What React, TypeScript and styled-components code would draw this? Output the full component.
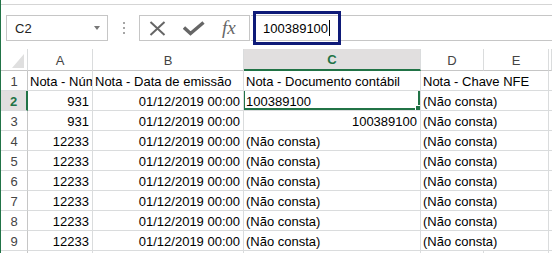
import styled, { createGlobalStyle } from "styled-components";

const GlobalStyle = createGlobalStyle`
  html, body {
    margin: 0;
    padding: 0;
    background: #ffffff;
  }
  body {
    font-family: "Liberation Sans", Arial, sans-serif;
  }
`;

const GREEN = "#217346";
const GRID = "#dadcdd";
const COLS = "27px 65px 151px 177px 63px 65px 1fr";

type Align = "left" | "right";

interface LinhaDados {
  n: number;
  a: string;
  b: string;
  c: string;
  cAlign: Align;
  d: string;
}

const linhas: LinhaDados[] = [
  { n: 1, a: "Nota - Número", b: "Nota - Data de emissão", c: "Nota - Documento contábil", cAlign: "left", d: "Nota - Chave NFE" },
  { n: 2, a: "931", b: "01/12/2019 00:00", c: "100389100", cAlign: "left", d: "(Não consta)" },
  { n: 3, a: "931", b: "01/12/2019 00:00", c: "100389100", cAlign: "right", d: "(Não consta)" },
  { n: 4, a: "12233", b: "01/12/2019 00:00", c: "(Não consta)", cAlign: "left", d: "(Não consta)" },
  { n: 5, a: "12233", b: "01/12/2019 00:00", c: "(Não consta)", cAlign: "left", d: "(Não consta)" },
  { n: 6, a: "12233", b: "01/12/2019 00:00", c: "(Não consta)", cAlign: "left", d: "(Não consta)" },
  { n: 7, a: "12233", b: "01/12/2019 00:00", c: "(Não consta)", cAlign: "left", d: "(Não consta)" },
  { n: 8, a: "12233", b: "01/12/2019 00:00", c: "(Não consta)", cAlign: "left", d: "(Não consta)" },
  { n: 9, a: "12233", b: "01/12/2019 00:00", c: "(Não consta)", cAlign: "left", d: "(Não consta)" },
];

const colunas = ["A", "B", "C", "D", "E", ""];

export default function App() {
  return (
    <>
      <GlobalStyle />
      <Janela>
        <TopLine />
        <BarraFormula>
          <CaixaNome>
            C2
            <Seta />
          </CaixaNome>
          <Alca>
            <Ponto />
            <Ponto />
            <Ponto />
          </Alca>
          <CaixaBotoes>
            <svg width="17" height="15" viewBox="0 0 17 15">
              <path d="M1.5 1 L15.5 14 M15.5 1 L1.5 14" stroke="#666666" strokeWidth="2" fill="none" />
            </svg>
            <svg width="22" height="15" viewBox="0 0 22 15">
              <path d="M1 6.5 L7.5 12.5 L20.5 1.5" stroke="#666666" strokeWidth="3.4" fill="none" />
            </svg>
            <Fx>fx</Fx>
          </CaixaBotoes>
          <EntradaFormula>
            100389100
            <Cursor />
            <Destaque />
          </EntradaFormula>
        </BarraFormula>

        <Linha $altura={22}>
          <Canto>
            <svg width="12" height="14" viewBox="0 0 12 14">
              <polygon points="12,0 12,14 0,14" fill="#dfdfdf" />
            </svg>
          </Canto>
          {colunas.map((letra, i) => (
            <CabecalhoColuna key={i} $ativo={letra === "C"}>
              {letra}
            </CabecalhoColuna>
          ))}
        </Linha>

        {linhas.map((linha) => (
          <Linha key={linha.n} $altura={20}>
            <CabecalhoLinha $ativo={linha.n === 2}>{linha.n}</CabecalhoLinha>
            <Celula $align={linha.n === 1 ? "left" : "right"}>{linha.a}</Celula>
            <Celula $align={linha.n === 1 ? "left" : "right"}>{linha.b}</Celula>
            <Celula $align={linha.cAlign}>
              {linha.c}
              {linha.n === 2 && (
                <Selecao>
                  <Alca2 />
                </Selecao>
              )}
            </Celula>
            <Celula $align="left" $transborda>
              {linha.d}
            </Celula>
            <Celula $align="left" />
            <Celula $align="left" />
          </Linha>
        ))}
        <Linha $altura={20}>
          <CabecalhoLinha $ativo={false} />
          <Celula $align="left" />
          <Celula $align="left" />
          <Celula $align="left" />
          <Celula $align="left" />
          <Celula $align="left" />
          <Celula $align="left" />
        </Linha>
      </Janela>
    </>
  );
}

const Janela = styled.div`
  width: 552px;
  height: 253px;
  overflow: hidden;
  box-sizing: border-box;
  border-left: 1px solid ${GREEN};
  background: #ffffff;
`;

const TopLine = styled.div`
  height: 5px;
  box-sizing: border-box;
  border-bottom: 1px solid #d5d5d5;
`;

const BarraFormula = styled.div`
  display: flex;
  height: 26px;
  margin: 10px 0 8px 5px;
`;

const CaixaNome = styled.div`
  width: 102px;
  box-sizing: border-box;
  border: 1px solid #c6c6c6;
  display: flex;
  align-items: center;
  padding-left: 8px;
  font-size: 13px;
  color: #222222;
`;

const Seta = styled.div`
  margin-left: auto;
  margin-right: 7px;
  width: 0;
  height: 0;
  border-top: 4px solid #777777;
  border-left: 3.5px solid transparent;
  border-right: 3.5px solid transparent;
`;

const Alca = styled.div`
  width: 31px;
  display: flex;
  flex-direction: column;
  align-items: center;
  justify-content: center;
  gap: 3px;
`;

const Ponto = styled.div`
  width: 2px;
  height: 2px;
  background: #a6a6a6;
`;

const CaixaBotoes = styled.div`
  width: 111px;
  box-sizing: border-box;
  border: 1px solid #c6c6c6;
  display: flex;
  align-items: center;
  padding-left: 9px;
  gap: 17px;
`;

const Fx = styled.span`
  font-family: "Liberation Serif", "Times New Roman", serif;
  font-style: italic;
  font-size: 19px;
  color: #666666;
  line-height: 1;
  margin-top: -2px;
`;

const EntradaFormula = styled.div`
  flex: 1;
  margin-left: 1px;
  position: relative;
  border-top: 1px solid #c6c6c6;
  border-bottom: 1px solid #c6c6c6;
  display: flex;
  align-items: center;
  padding-left: 12px;
  font-size: 13px;
  color: #000000;
`;

const Cursor = styled.span`
  display: inline-block;
  width: 1px;
  height: 16px;
  background: #000000;
  margin-left: 1px;
`;

const Destaque = styled.div`
  position: absolute;
  left: 2px;
  top: -5px;
  width: 88px;
  height: 34px;
  box-sizing: border-box;
  border: 3px solid #0e1a78;
`;

const Linha = styled.div<{ $altura: number }>`
  display: grid;
  grid-template-columns: ${COLS};
  height: ${(p) => p.$altura}px;
`;

const Canto = styled.div`
  box-sizing: border-box;
  border-right: 1px solid ${GRID};
  border-bottom: 1px solid #c6c6c6;
  display: flex;
  align-items: flex-end;
  justify-content: flex-end;
  padding: 0 3px 2px 0;
`;

const CabecalhoColuna = styled.div<{ $ativo: boolean }>`
  box-sizing: border-box;
  border-right: 1px solid ${GRID};
  border-bottom: ${(p) => (p.$ativo ? `2px solid ${GREEN}` : "1px solid #c6c6c6")};
  background: ${(p) => (p.$ativo ? "#e1dfdf" : "#ffffff")};
  color: ${(p) => (p.$ativo ? GREEN : "#444444")};
  font-weight: ${(p) => (p.$ativo ? "bold" : "normal")};
  font-size: 13px;
  display: flex;
  align-items: center;
  justify-content: center;
  padding-top: 1px;
`;

const CabecalhoLinha = styled.div<{ $ativo: boolean }>`
  box-sizing: border-box;
  border-right: ${(p) => (p.$ativo ? `2px solid ${GREEN}` : "1px solid #c6c6c6")};
  border-bottom: 1px solid ${GRID};
  background: ${(p) => (p.$ativo ? "#e1dfdf" : "#ffffff")};
  color: ${(p) => (p.$ativo ? GREEN : "#444444")};
  font-weight: ${(p) => (p.$ativo ? "bold" : "normal")};
  font-size: 13px;
  line-height: 14px;
  display: flex;
  align-items: flex-end;
  justify-content: center;
  padding-bottom: 1px;
`;

const Celula = styled.div<{ $align: Align; $transborda?: boolean }>`
  position: relative;
  box-sizing: border-box;
  border-right: ${(p) => (p.$transborda ? "none" : `1px solid ${GRID}`)};
  border-bottom: 1px solid ${GRID};
  display: flex;
  align-items: flex-end;
  justify-content: ${(p) => (p.$align === "right" ? "flex-end" : "flex-start")};
  padding: 0 3px 1px 2px;
  font-size: 13px;
  line-height: 14px;
  color: #000000;
  white-space: nowrap;
  overflow: ${(p) => (p.$transborda ? "visible" : "hidden")};
  z-index: ${(p) => (p.$transborda ? 1 : 0)};
`;

const Selecao = styled.div`
  position: absolute;
  left: -1px;
  top: -2px;
  right: 0;
  bottom: 0;
  border: 2px solid ${GREEN};
  pointer-events: none;
`;

const Alca2 = styled.div`
  position: absolute;
  right: -4px;
  bottom: -4px;
  width: 5px;
  height: 5px;
  background: ${GREEN};
  border: 1px solid #ffffff;
`;
